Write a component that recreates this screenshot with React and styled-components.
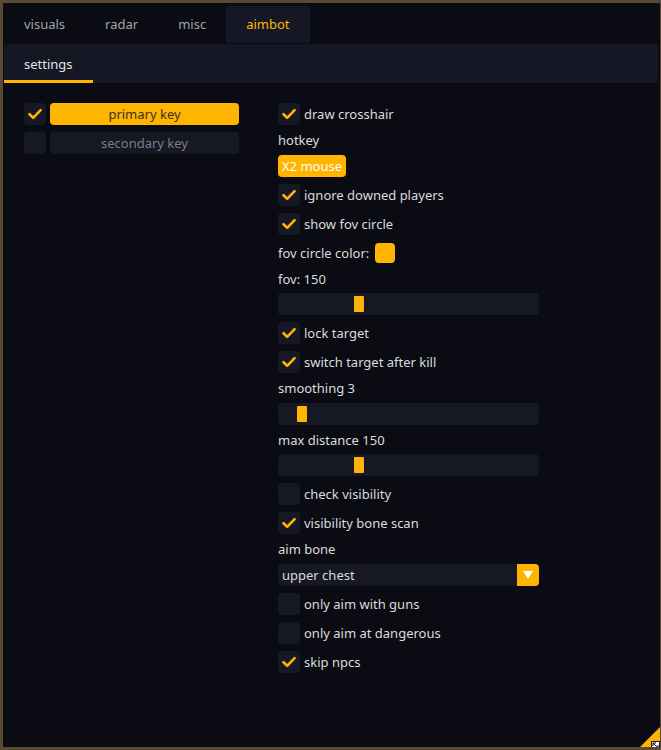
import React from "react";
import styled, { createGlobalStyle } from "styled-components";

const accent = "#ffb400";

const GlobalStyle = createGlobalStyle`
  html, body {
    margin: 0;
    background: #5a4933;
  }
  body {
    font-family: "Noto Sans", "Open Sans", sans-serif;
    font-size: 13px;
  }
`;

const Check = () => (
    <svg width="16" height="16" viewBox="0 0 16 16">
        <path d="M2.5 8.2 L6.2 11.8 L13.6 4.2" fill="none" stroke={accent} strokeWidth="2.6" strokeLinecap="round" strokeLinejoin="round" />
    </svg>
);

const CheckRow = ({ checked, children }) => (
    <Row>
        <Box>{checked && <Check />}</Box>
        <Label>{children}</Label>
    </Row>
);

const Slider = ({ pos }) => (
    <Track>
        <Thumb style={{ left: pos }} />
    </Track>
);

const App = () => {
    const tabs = ["visuals", "radar", "misc", "aimbot"];

    return (
        <>
            <GlobalStyle />
            <Window>
                <TabBar>
                    {tabs.map((t) => (
                        <Tab key={t} $active={t === "aimbot"}>{t}</Tab>
                    ))}
                </TabBar>
                <SubBar>
                    <SubTab>settings</SubTab>
                </SubBar>
                <Body>
                    <LeftCol>
                        <KeyRow>
                            <Box><Check /></Box>
                            <KeyButton $on>primary key</KeyButton>
                        </KeyRow>
                        <KeyRow>
                            <Box />
                            <KeyButton>secondary key</KeyButton>
                        </KeyRow>
                    </LeftCol>
                    <RightCol>
                        <CheckRow checked>draw crosshair</CheckRow>
                        <Text>hotkey</Text>
                        <div><HotkeyButton>X2 mouse</HotkeyButton></div>
                        <CheckRow checked>ignore downed players</CheckRow>
                        <CheckRow checked>show fov circle</CheckRow>
                        <Row>
                            <ColorLabel>fov circle color:</ColorLabel>
                            <Swatch />
                        </Row>
                        <Text>fov: 150</Text>
                        <Slider pos={76} />
                        <CheckRow checked>lock target</CheckRow>
                        <CheckRow checked>switch target after kill</CheckRow>
                        <Text>smoothing 3</Text>
                        <Slider pos={19} />
                        <Text>max distance 150</Text>
                        <Slider pos={76} />
                        <CheckRow>check visibility</CheckRow>
                        <CheckRow checked>visibility bone scan</CheckRow>
                        <Text>aim bone</Text>
                        <Combo>
                            <ComboValue>upper chest</ComboValue>
                            <ComboArrow>
                                <svg width="12" height="10" viewBox="0 0 12 10">
                                    <path d="M1 1 L11 1 L6 9 Z" fill="#fff" />
                                </svg>
                            </ComboArrow>
                        </Combo>
                        <CheckRow>only aim with guns</CheckRow>
                        <CheckRow>only aim at dangerous</CheckRow>
                        <CheckRow checked>skip npcs</CheckRow>
                    </RightCol>
                </Body>
                <Grip />
                <Cursor>
                    <svg width="9" height="9" viewBox="0 0 9 9">
                        <rect x="0.5" y="0.5" width="8" height="8" fill="#fff" stroke="#222" />
                        <path d="M2 2 L7 7 M2 2 L2 5 M2 2 L5 2 M7 7 L7 4 M7 7 L4 7" stroke="#111" strokeWidth="1" fill="none" />
                    </svg>
                </Cursor>
            </Window>
        </>
    );
};

const Window = styled.div`
  position: relative;
  margin: 3px 1px 0 3px;
  height: 744px;
  background: #0b0b13;
  overflow: hidden;
  color: #dcdcdc;
`;

const TabBar = styled.div`
  display: flex;
  align-items: flex-end;
  height: 40px;
  padding-left: 1px;
`;

const Tab = styled.div`
  height: 37px;
  padding: 0 20px 2px 20px;
  display: flex;
  align-items: center;
  box-sizing: border-box;
  color: ${(p) => (p.$active ? accent : "#a3a3ab")};
  background: ${(p) => (p.$active ? "#151724" : "transparent")};
`;

const SubBar = styled.div`
  height: 39px;
  margin: 1px 2px 0 1px;
  background: #151724;
  border-radius: 0 4px 4px 0;
  display: flex;
`;

const SubTab = styled.div`
  display: flex;
  align-items: center;
  padding: 4px 20px 0 20px;
  color: #e4e4e4;
  border-bottom: 3px solid ${accent};
`;

const Body = styled.div`
  display: flex;
  gap: 39px;
  padding: 20px 0 0 21px;
`;

const LeftCol = styled.div`
  width: 215px;
  display: flex;
  flex-direction: column;
  gap: 7px;
`;

const RightCol = styled.div`
  width: 261px;
  display: flex;
  flex-direction: column;
  gap: 7px;
`;

const Row = styled.div`
  display: flex;
  align-items: center;
  height: 22px;
`;

const KeyRow = styled.div`
  display: flex;
  gap: 4px;
  height: 22px;
`;

const Box = styled.div`
  width: 22px;
  height: 22px;
  flex: none;
  border-radius: 4px;
  background: #161826;
  display: flex;
  align-items: center;
  justify-content: center;
`;

const Label = styled.span`
  margin-left: 4px;
  white-space: nowrap;
`;

const KeyButton = styled.div`
  flex: 1;
  border-radius: 4px;
  display: flex;
  align-items: center;
  justify-content: center;
  background: ${(p) => (p.$on ? accent : "#161826")};
  color: ${(p) => (p.$on ? "#3a3020" : "#7d7d86")};
`;

const Text = styled.div`
  height: 15.5px;
  line-height: 17px;
  white-space: nowrap;
`;

const HotkeyButton = styled.span`
  display: inline-flex;
  align-items: center;
  height: 22px;
  padding: 0 4px;
  border-radius: 4px;
  background: ${accent};
  color: #fff;
`;

const ColorLabel = styled.span`
  margin-right: 6px;
`;

const Swatch = styled.div`
  width: 20px;
  height: 20px;
  border-radius: 4px;
  background: ${accent};
`;

const Track = styled.div`
  position: relative;
  height: 22px;
  border-radius: 4px;
  background: #161826;
`;

const Thumb = styled.div`
  position: absolute;
  top: 3px;
  width: 10px;
  height: 16px;
  border-radius: 1px;
  background: ${accent};
`;

const Combo = styled.div`
  display: flex;
  height: 22px;
  border-radius: 4px;
  background: #161826;
  overflow: hidden;
`;

const ComboValue = styled.div`
  flex: 1;
  display: flex;
  align-items: center;
  padding-left: 4px;
`;

const ComboArrow = styled.div`
  width: 22px;
  display: flex;
  align-items: center;
  justify-content: center;
  background: ${accent};
`;

const Grip = styled.div`
  position: absolute;
  right: 0;
  bottom: 0;
  width: 20px;
  height: 20px;
  background: ${accent};
  clip-path: polygon(100% 0, 100% 100%, 0 100%);
`;

const Cursor = styled.div`
  position: absolute;
  right: 0;
  bottom: -3px;
  line-height: 0;
`;

export default App;
